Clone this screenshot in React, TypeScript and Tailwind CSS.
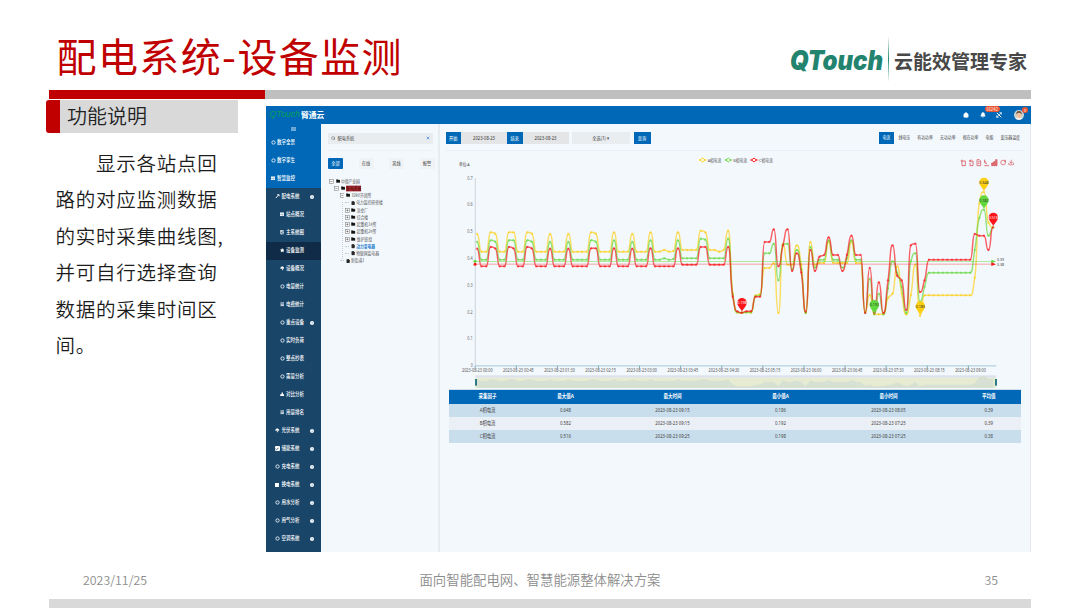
import type { ReactNode } from "react";
import {
  Bell,
  Check,
  Download,
  FileText,
  Folder,
  House,
  Image,
  Maximize2,
  RotateCw,
  Search,
  Star,
  Umbrella,
  X,
} from "lucide-react";

const CJK = "font-['Noto_Sans_CJK_SC',sans-serif]";

/* ---------- sidebar ---------- */

type IconName =
  | "circle"
  | "grid"
  | "bolt"
  | "image"
  | "star"
  | "umbrella"
  | "list"
  | "org"
  | "check"
  | "square";

interface MenuItem {
  label: string;
  icon: IconName;
  level: 0 | 1 | 2;
  more?: boolean;
  active?: boolean;
}

const MENU: MenuItem[] = [
  { label: "数字全景", icon: "circle", level: 0 },
  { label: "数字孪生", icon: "circle", level: 0 },
  { label: "智慧监控", icon: "grid", level: 0 },
  { label: "配电系统", icon: "bolt", level: 1, more: true },
  { label: "站点概况", icon: "grid", level: 2 },
  { label: "主系统图", icon: "image", level: 2 },
  { label: "设备监测", icon: "star", level: 2, active: true },
  { label: "设备概况", icon: "umbrella", level: 2 },
  { label: "电量统计", icon: "circle", level: 2 },
  { label: "电费统计", icon: "list", level: 2 },
  { label: "重点设备", icon: "circle", level: 2, more: true },
  { label: "实时负荷", icon: "circle", level: 2 },
  { label: "整点抄表", icon: "circle", level: 2 },
  { label: "需量分析", icon: "circle", level: 2 },
  { label: "对比分析", icon: "org", level: 2 },
  { label: "用量排名", icon: "list", level: 2 },
  { label: "光伏系统", icon: "umbrella", level: 1, more: true },
  { label: "储能系统", icon: "check", level: 1, more: true },
  { label: "充电系统", icon: "circle", level: 1, more: true },
  { label: "换电系统", icon: "square", level: 1, more: true },
  { label: "用水分析", icon: "circle", level: 1, more: true },
  { label: "用气分析", icon: "circle", level: 1, more: true },
  { label: "空调系统", icon: "circle", level: 1, more: true },
];

const INDENT = ["pl-[4.5px]", "pl-[9px]", "pl-[13.5px]"];

function MenuIcon({ name }: { name: IconName }) {
  switch (name) {
    case "circle":
      return (
        <svg width="5" height="5" viewBox="0 0 10 10">
          <circle cx="5" cy="5" r="3.3" fill="none" stroke="#dfe8f0" strokeWidth="1.9" />
        </svg>
      );
    case "grid":
      return (
        <svg width="4.5" height="4.5" viewBox="0 0 10 10">
          <path d="M0 1 H10 V9 H0 Z" fill="#eef4f9" />
          <path d="M5 3 V9 M0 5.5 H10" stroke="#7f9fbd" strokeWidth="1" />
        </svg>
      );
    case "bolt":
      return (
        <svg width="4.5" height="4.5" viewBox="0 0 10 10">
          <path d="M2 9 L8 2 M5 1.5 H9 V5" stroke="white" strokeWidth="2" fill="none" />
        </svg>
      );
    case "image":
      return <Image size={4.5} strokeWidth={3.5} />;
    case "star":
      return <Star size={4.5} fill="white" />;
    case "umbrella":
      return <Umbrella size={4.5} fill="white" strokeWidth={2} />;
    case "list":
      return (
        <svg width="4.5" height="4.5" viewBox="0 0 10 10">
          <path d="M1 2 H9 M1 5 H9 M1 8 H9" stroke="white" strokeWidth="1.8" />
        </svg>
      );
    case "org":
      return (
        <svg width="4.5" height="4.5" viewBox="0 0 10 10" fill="white">
          <path d="M3.5 1 H6.5 V5 H9.5 V9 H.5 V5 H3.5 Z" />
        </svg>
      );
    case "check":
      return (
        <span className="flex size-[4.5px] items-center justify-center rounded-[1px] bg-white text-[#194569]">
          <Check size={4} strokeWidth={5} />
        </span>
      );
    default:
      return <span className="size-[4px] bg-white" />;
  }
}

function Sidebar() {
  return (
    <nav className="flex w-[54.5px] shrink-0 flex-col bg-[#194569] text-white">
      <div className="flex h-[9.5px] items-center justify-center bg-[#0068b7]">
        <svg width="5" height="4" viewBox="0 0 10 8">
          <path d="M0 1.5 H10 M0 4 H10 M0 6.5 H10" stroke="white" strokeWidth="1.2" />
        </svg>
      </div>
      {MENU.map((m) => (
        <div
          key={m.label}
          className={`flex h-[18px] shrink-0 items-center ${INDENT[m.level]} ${
            m.level === 0 ? "bg-[#0068b7]" : m.active ? "bg-[#0f2b47]" : ""
          }`}
        >
          <span className="flex w-[6.5px] shrink-0 items-center">
            <MenuIcon name={m.icon} />
          </span>
          <span className="scale-y-120 text-[4.5px] leading-none font-medium whitespace-nowrap">{m.label}</span>
          {m.more ? (
            <svg className="mr-[7px] ml-auto" width="4" height="4" viewBox="0 0 8 8">
              <circle cx="4" cy="4" r="4" fill="white" />
              <path d="M3.2 2.4 L5 4 L3.2 5.6" fill="none" stroke="#194569" strokeWidth="1" />
            </svg>
          ) : null}
        </div>
      ))}
    </nav>
  );
}

/* ---------- station tree ---------- */

interface Node {
  label: string;
  depth: 0 | 1 | 2 | 3;
  leaf?: boolean;
  open?: boolean;
  hit?: boolean;
  selected?: boolean;
}

const NODES: Node[] = [
  { label: "中德产业园", depth: 0, open: true },
  { label: "配电系统", depth: 1, open: true, hit: true },
  { label: "10kV开闭所", depth: 2, open: true },
  { label: "电力监控研修楼", depth: 3, leaf: true },
  { label: "冶金厂", depth: 3 },
  { label: "综合楼", depth: 3 },
  { label: "起重机1#所", depth: 3 },
  { label: "起重机2#所", depth: 3 },
  { label: "维护班组", depth: 3 },
  { label: "动力变电器", depth: 3, leaf: true, selected: true },
  { label: "物联网监电器", depth: 3, leaf: true },
  { label: "新街道1", depth: 2, leaf: true },
];

const TREE_INDENT = ["pl-0", "pl-[5.3px]", "pl-[10.6px]", "pl-[15.9px]"];

function TreeRow({ node }: { node: Node }) {
  return (
    <div className={`flex h-[7.25px] items-center ${TREE_INDENT[node.depth]}`}>
      {node.leaf ? (
        <span className="mr-[1.8px] h-px w-[4.2px] border-t border-dotted border-[#c3cad0]" />
      ) : (
        <svg className="mr-[1.8px] shrink-0" width="4.8" height="4.8" viewBox="0 0 9 9">
          <rect x=".7" y=".7" width="7.6" height="7.6" fill="#fff" stroke="#777" strokeWidth="1" />
          <path d={node.open ? "M2.5 4.5 H6.5" : "M2.5 4.5 H6.5 M4.5 2.5 V6.5"} stroke="#444" />
        </svg>
      )}
      {node.leaf ? (
        <FileText className="mr-[1px] shrink-0" size={4.3} color="#222" fill="#333" strokeWidth={2} />
      ) : (
        <Folder className="mr-[1px] shrink-0" size={4.3} color="#111" fill="#111" />
      )}
      <span
        className={`scale-y-115 text-[3.8px] leading-[5px] whitespace-nowrap ${
          node.hit
            ? "bg-[#b02a2e] text-[#32080a]"
            : node.selected
              ? "font-bold text-[#1b7bc8]"
              : "text-[#555]"
        }`}
      >
        {node.label}
      </span>
    </div>
  );
}

function StationPanel() {
  return (
    <aside className="w-[119px] shrink-0 border-r-2 border-[#e5edf0] bg-[#f3f8fd] pl-[7.5px]">
      <div className="mt-[8.5px] flex h-[11px] w-[105px] items-center bg-[#e8ecef] px-[3px] text-[4.2px] text-[#444]">
        <Search size={4.5} />
        <span className="ml-[2px] scale-y-120">配电系统</span>
        <X className="ml-auto" size={4} color="#2f7fd6" strokeWidth={4} />
      </div>
      <div className="mt-[6px] h-px w-[105px] bg-[#edf2f6]" />
      <div className="mt-[7px] flex gap-[15.5px] text-[4.2px] text-[#444]">
        <span className="flex h-[11px] w-[15px] items-center justify-center rounded-[1px] bg-[#0068b7] text-white">
          <span className="scale-y-120">全部</span>
        </span>
        {["在线", "离线", "报警"].map((t) => (
          <span key={t} className="flex h-[11px] w-[15px] items-center justify-center bg-[#f0f3f5]">
            <span className="scale-y-120">{t}</span>
          </span>
        ))}
      </div>
      <div className="relative mt-[9px] ml-[1px]">
        <span className="absolute top-[24px] left-[13px] h-[57px] w-px border-l border-dotted border-[#c3cad0]" />
        {NODES.map((n) => (
          <TreeRow key={n.label} node={n} />
        ))}
      </div>
    </aside>
  );
}

/* ---------- chart ---------- */

const YELLOW = "#fdcf12";
const GREEN = "#62d83c";
const RED = "#fb1418";

// [A, B, C] phase samples every 5 minutes, in plot units (0.1 A = 80.4 units, 0 at y 587)
const LOW = [245, 269, 289];
const MID = [240, 265, 284];
const HI_A = [187, 211, 231];
const HI_B = [191, 215, 235];
const PEAK = [187, 211, 235];
const DIP = [192, 216, 236];
const TAIL = [376, 308, 269];
const FLAT = [279, 269, 255];

const SAMPLES: number[][] = [
  DIP, LOW, LOW, HI_A, HI_B, LOW, LOW, HI_A, [187, 211, 235], LOW, LOW,
  HI_A, HI_B, LOW, LOW, LOW, DIP, LOW, LOW, LOW, DIP, LOW, LOW, LOW, LOW,
  PEAK, HI_B, LOW, LOW, LOW, PEAK, LOW, LOW, LOW, DIP, LOW, LOW, LOW,
  PEAK, LOW, LOW, [240, 265, 289], LOW, [243, 267, 289], PEAK, MID, MID, MID, MID,
  [182, 206, 231], [187, 209, 231], MID, MID, [245, 265, 284], [240, 265, 284],
  [182, 206, 231], [370, 374, 380], [427, 427, 424], [428, 428, 428], [427, 427, 424], [428, 427, 424],
  [376, 379, 380], [372, 376, 380], [294, 250, 216], [294, 250, 216], [279, 221, 178],
  [429, 331, 289], [222, 223, 226], [284, 221, 178], [284, 298, 303], [226, 240, 250],
  [284, 298, 307], [429, 429, 425], [216, 231, 240], [284, 293, 303], [279, 269, 260],
  FLAT, [216, 211, 202], FLAT, FLAT, [279, 293, 303], [279, 265, 255], [216, 211, 197],
  FLAT, FLAT, [425, 429, 429], [375, 327, 294], [433, 433, 429], [433, 371, 337],
  [433, 433, 429], [384, 355, 331], [371, 274, 226], [289, 308, 317], [371, 351, 331],
  [433, 429, 420], [375, 274, 226], [284, 250, 221], [438, 395, 366], [376, 351, 331],
  TAIL, TAIL, TAIL, TAIL, TAIL, TAIL, TAIL, TAIL, TAIL, TAIL,
  [323, 240, 192], [100, 144, 197], [66, 119, 197], [158, 197, 240], [172, 172, 172],
];

const STEP = 13.7;
const BEND = 0.62;
const xAt = (i: number) => 111 + i * STEP;

function smoothPath(ys: number[]) {
  const slope = ys.map((y, i) => {
    if (i === 0 || i === ys.length - 1) return 0;
    const a = y - ys[i - 1];
    const b = ys[i + 1] - y;
    return a * b <= 0 ? 0 : (2 * a * b) / (a + b);
  });
  let d = `M${xAt(0)} ${ys[0]}`;
  for (let i = 1; i < ys.length; i++) {
    const x1 = xAt(i - 1) + STEP * BEND;
    const y1 = ys[i - 1] + slope[i - 1] * BEND;
    const x2 = xAt(i) - STEP * BEND;
    const y2 = ys[i] - slope[i] * BEND;
    d += ` C${x1} ${y1} ${x2} ${y2} ${xAt(i)} ${ys[i]}`;
  }
  return d;
}

function Series({ index, color }: { index: number; color: string }) {
  const ys = SAMPLES.map((s) => s[index]);
  return (
    <g>
      <path d={smoothPath(ys)} fill="none" stroke={color} strokeWidth="4.4" opacity=".66" />
      {ys.map((y, i) => (
        <circle key={i} cx={xAt(i)} cy={y} r="3.5" fill={color} opacity=".6" />
      ))}
    </g>
  );
}

function Pin({ x, y, color, text, light }: { x: number; y: number; color: string; text: string; light?: boolean }) {
  return (
    <g transform={`translate(${x} ${y})`}>
      <path d="M0 25 C-2 16 -14 10 -14 -2 A14 14 0 0 1 14 -2 C14 10 2 16 0 25 Z" fill={color} />
      <text y="3" fontSize="11" textAnchor="middle" fill={light ? "#fff" : "#333"}>
        {text}
      </text>
    </g>
  );
}

const TIMES = [
  "00:00", "00:45", "01:30", "02:15", "03:00", "03:45", "04:30",
  "05:15", "06:00", "06:45", "07:30", "08:15", "09:00",
];

const LEGEND = [
  { x: 788, label: "A相电流", color: YELLOW },
  { x: 865, label: "B相电流", color: GREEN },
  { x: 942, label: "C相电流", color: RED },
];

function Chart() {
  const area = SAMPLES.map((s, i) => `${xAt(i).toFixed(1)},${(612 + s[0] * 0.085).toFixed(1)}`).join(" ");
  return (
    <svg className="block h-[239px] w-[591px]" viewBox="0 -57 1773 717" fontFamily="'Noto Sans','Noto Sans CJK SC',sans-serif">
      {LEGEND.map((l) => (
        <g key={l.label}>
          <path d={`M${l.x - 11} -30 h22`} stroke={l.color} strokeWidth="3.5" />
          <path d={`M${l.x - 7} -30 l7 -6 l7 6 l-7 6 Z`} fill="#fff" stroke={l.color} strokeWidth="3" />
          <text x={l.x + 15} y="-25.5" fontSize="13" fill="#555" textLength="41" lengthAdjust="spacingAndGlyphs">
            {l.label}
          </text>
        </g>
      ))}
      <text x="57" y="-12" fontSize="13" fill="#444" textLength="32" lengthAdjust="spacingAndGlyphs">
        单位:A
      </text>
      <path d="M106 24 V587" stroke="#d5dde3" strokeWidth="4" />
      <path d="M105 587.5 H1669" stroke="#b4d3df" strokeWidth="4" />
      {["0.7", "0.6", "0.5", "0.4", "0.3", "0.2", "0.1", "0"].map((v, i) => (
        <text key={v} x="98" y={29 + i * 80.4} fontSize="14" fill="#666" textAnchor="end" textLength={v === "0" ? 6 : 16} lengthAdjust="spacingAndGlyphs">
          {v}
        </text>
      ))}
      {TIMES.map((t, i) => (
        <g key={t}>
          <path d={`M${105.5 + i * 123.3} 587 v7`} stroke="#7fa9b8" strokeWidth="3" />
          <text x={66 + i * 123.3} y="606" fontSize="14" fill="#555" textLength="92" lengthAdjust="spacingAndGlyphs">
            {`2023-08-23 ${t}`}
          </text>
        </g>
      ))}

      <Series index={0} color={YELLOW} />
      <Series index={1} color={GREEN} />
      <Series index={2} color={RED} />

      <path d="M105 274.5 H1655" stroke={GREEN} strokeWidth="2.5" opacity=".55" />
      <path d="M105 282.5 H1655" stroke={RED} strokeWidth="2.5" opacity=".45" />
      <circle cx="105" cy="274" r="4.5" fill={GREEN} />
      <circle cx="105" cy="282.5" r="4.5" fill={RED} />
      <path d="M1654 269 l14 5.5 l-14 5.5 Z" fill={GREEN} />
      <path d="M1654 277 l14 5.5 l-14 5.5 Z" fill={RED} />
      <text x="1671" y="274" fontSize="9" fill="#444" textLength="21" lengthAdjust="spacingAndGlyphs">0.39</text>
      <text x="1671" y="287" fontSize="9" fill="#444" textLength="21" lengthAdjust="spacingAndGlyphs">0.38</text>

      <Pin x={906} y={400} color={RED} text="0.198" light />
      <Pin x={1303} y={406} color={GREEN} text="0.192" />
      <Pin x={1441} y={410} color={YELLOW} text="0.186" />
      <Pin x={1632} y={39} color={YELLOW} text="0.648" />
      <Pin x={1632} y={92} color={GREEN} text="0.582" />
      <Pin x={1660} y={144} color={RED} text="0.516" light />

      <rect x="106" y="616" width="1562" height="7" fill="#dbe1ee" />
      <rect x="106" y="623" width="1562" height="31" fill="#e6ebd2" />
      <polygon points={`111,654 ${area} 1660,654`} fill="#d6e1d3" />
      <rect x="105" y="627" width="6" height="20" fill="#2c7a86" />
      <rect x="1665" y="627" width="6" height="20" fill="#2c7a86" />
      <path d="M27 658.5 H1744" stroke="#c6d8e8" strokeWidth="2.5" />

      <g fill="none" stroke="#d5494e" strokeWidth="2.2">
        <path d="M1562 -27 h14 v14 h-10 v-18" />
        <path d="M1594 -31 l-6 4 l6 4 M1588 -27 h11 v14 h-9 v-8" />
        <path d="M1611 -31 h7 l4 4 v14 h-11 Z M1614 -25 h5 M1614 -20 h5" />
        <path d="M1634 -31 v9 l7 4 M1633 -13 h14 M1633 -27 l6 5" />
        <path d="M1655 -13 v-8 h4 v8 Z M1661 -13 v-12 h4 v12 Z M1667 -13 v-18 h4 v18 Z" fill="#e58a8d" />
      </g>
      <RotateCw x="1680" y="-32" width="19" height="19" color="#d5494e" strokeWidth={2.5} />
      <Download x="1704" y="-32" width="19" height="19" color="#d5494e" strokeWidth={2.5} />
    </svg>
  );
}

/* ---------- toolbar + table ---------- */

function Blue({ children, className = "w-[15.5px]" }: { children: ReactNode; className?: string }) {
  return (
    <span className={`flex h-[11.5px] shrink-0 items-center justify-center bg-[#0068b7] text-white ${className}`}>
      <span className="scale-y-120">{children}</span>
    </span>
  );
}

function DateField() {
  return (
    <span className="flex h-[11.5px] w-[46px] items-center justify-center bg-[#e4e5e6] font-['Noto_Sans'] text-[4.2px] text-[#333]">
      <span className="translate-y-[0.7px] scale-y-120">2023-08-23</span>
    </span>
  );
}

const METRICS = ["线电压", "有功功率", "无功功率", "视在功率", "电能", "变压器温度"];

function Toolbar() {
  return (
    <div className="mx-[6px] flex h-[26.5px] items-end border-b border-[#e9eff4] pb-[6px] text-[4.2px] text-[#444]">
      <Blue>开始</Blue>
      <DateField />
      <Blue>结束</Blue>
      <DateField />
      <span className="ml-[3px] flex h-[11.5px] w-[58px] items-center justify-center bg-[#e9edf0]">
        <span className="scale-y-120">全选(3) ▾</span>
      </span>
      <Blue className="ml-[4px] w-[17px]">查询</Blue>
      <div className="mr-[4px] ml-auto flex items-center gap-[7.2px] text-[3.9px] whitespace-nowrap">
        <Blue className="-mr-[2.5px] w-[15px]">电流</Blue>
        {METRICS.map((m) => (
          <span key={m} className="scale-y-120">
            {m}
          </span>
        ))}
      </div>
    </div>
  );
}

const HEAD = ["采集因子", "最大值A", "最大时间", "最小值A", "最小时间", "平均值"];
const ROWS = [
  ["A相电流", "0.648", "2023-08-23 09:15", "0.186", "2023-08-23 08:05", "0.39"],
  ["B相电流", "0.582", "2023-08-23 09:15", "0.192", "2023-08-23 07:25", "0.39"],
  ["C相电流", "0.516", "2023-08-23 09:25", "0.198", "2023-08-23 07:25", "0.38"],
];
const COLS = "grid grid-cols-[78px_78px_136px_80px_136px_64.5px] items-center text-center";

function ResultTable() {
  return (
    <div className="ml-[9px] w-[572.5px] font-['Noto_Sans','Noto_Sans_CJK_SC',sans-serif] text-[4.3px] text-[#444]">
      <div className={`${COLS} h-[13.5px] bg-[#0068b7] text-[4.5px] font-bold text-white`}>
        {HEAD.map((h) => (
          <span key={h} className="scale-y-120">
            {h}
          </span>
        ))}
      </div>
      {ROWS.map((row, i) => (
        <div key={row[0]} className={`${COLS} h-[13px] ${i % 2 ? "bg-[#ebeff6]" : "bg-[#c8deec]"}`}>
          {row.map((cell, j) => (
            <span key={j} className="scale-y-120">
              {cell}
            </span>
          ))}
        </div>
      ))}
    </div>
  );
}

function TopBar() {
  return (
    <header className="flex h-[18.5px] shrink-0 items-center bg-[#0068b7] pl-[3.5px] text-white">
      <span className="w-[31.5px] font-['Liberation_Sans'] text-[8.8px] leading-none text-[#04a05a] italic">QTouch</span>
      <span className="text-[7.8px] leading-none font-bold">臂通云</span>
      <div className="mr-[7.5px] ml-auto flex items-center">
        <House size={6} fill="white" strokeWidth={1.5} />
        <Bell className="ml-[11px]" size={6} fill="white" />
        <span className="relative ml-[10px] flex">
          <Maximize2 size={6} strokeWidth={3} />
          <svg className="absolute top-0 left-0" width="6" height="6" viewBox="0 0 24 24">
            <path d="M3 3 L21 21" stroke="white" strokeWidth="4" />
          </svg>
          <span className="absolute -top-[5.5px] -left-[11px] rounded-full bg-[#ea5430] px-[1.5px] text-[4.4px] leading-[6px]">
            16242
          </span>
        </span>
        <span className="relative ml-[12px] flex">
          <svg width="10" height="10" viewBox="0 0 20 20">
            <circle cx="10" cy="10" r="10" fill="#c9d3d3" />
            <path d="M3 17 Q10 11 17 17 Q10 22 3 17" fill="#f7f7f7" />
            <ellipse cx="10" cy="10" rx="5" ry="6.3" fill="#eec39c" />
            <path d="M4.5 9 Q4 2 10 2 Q16 2 15.5 9 Q13 5 10 5.5 Q7 5 4.5 9" fill="#5f4c45" />
          </svg>
          <span className="absolute -top-[3px] -right-[4.5px] size-[6px] rounded-full bg-[#ea5430] text-center text-[4px] leading-[6px]">
            0
          </span>
        </span>
      </div>
    </header>
  );
}

function Dashboard() {
  return (
    <section className="mt-[6.5px] ml-[266px] flex h-[446.5px] w-[765px] flex-col overflow-hidden bg-[#f3f8fd]">
      <TopBar />
      <div className="flex min-h-0 flex-1">
        <Sidebar />
        <StationPanel />
        <main className="min-w-0 flex-1 border-r border-[#e2e8ed]">
          <Toolbar />
          <div className="mt-[0.5px] w-[591px]">
            <Chart />
          </div>
          <ResultTable />
        </main>
      </div>
    </section>
  );
}

/* ---------- slide ---------- */

const LINES = [
  "显示各站点回",
  "路的对应监测数据",
  "的实时采集曲线图,",
  "并可自行选择查询",
  "数据的采集时间区",
  "间。",
];

function Description() {
  return (
    <div className="absolute top-[100px] left-[46px] w-[192px]">
      <div className="flex h-[33px]">
        <span className="w-[14px] rounded-l-[3px] bg-[#c00000]" />
        <h2 className="flex flex-1 items-center bg-[#d9d9d9] pb-px pl-[7px] text-[20px] leading-none font-[350] text-[#222]">
          功能说明
        </h2>
      </div>
      <div className="mt-[11.5px] ml-[9.5px] text-[19.5px] leading-[36.6px] font-[350] tracking-[0.75px] whitespace-nowrap text-[#1c1c1c]">
        {LINES.map((line, i) => (
          <p key={line} className={i === 0 ? "pl-[40.5px]" : ""}>
            {line}
          </p>
        ))}
      </div>
    </div>
  );
}

function BrandLogo() {
  return (
    <svg className="mt-[34px] mr-[50px] h-[50px] w-[242px]" viewBox="788 34 242 50">
      <defs>
        <linearGradient id="divider" x1="0" y1="0" x2="0" y2="1">
          <stop offset="0" stopColor="#2b8a74" stopOpacity="0" />
          <stop offset=".5" stopColor="#2b8a74" />
          <stop offset="1" stopColor="#2b8a74" stopOpacity="0" />
        </linearGradient>
      </defs>
      <text x="790" y="69.5" fontFamily="Inter" fontWeight="900" fontStyle="italic" fontSize="27" fill="#22836f" textLength="93" lengthAdjust="spacingAndGlyphs">
        QTouch
      </text>
      <rect x="888" y="36" width="1" height="46" fill="url(#divider)" />
      <text x="894" y="68.5" fontFamily="'Noto Sans CJK SC',sans-serif" fontWeight="700" fontSize="19.5" fill="#484848" textLength="133" lengthAdjust="spacingAndGlyphs">
        云能效管理专家
      </text>
    </svg>
  );
}

export default function App() {
  return (
    <div className={`relative flex h-[608px] w-[1080px] flex-col overflow-hidden bg-white ${CJK}`}>
      <div className="flex h-[90px] shrink-0 justify-between">
        <h1 className="mt-[25px] ml-[56.5px] text-[40px] leading-[60px] font-normal tracking-[1.4px] whitespace-nowrap text-[#c00000]">
          配电系统-设备监测
        </h1>
        <BrandLogo />
      </div>
      <div className="ml-[49px] flex h-[9px] w-[982px] shrink-0">
        <span className="w-[216px] bg-[#c00000]" />
        <span className="flex-1 bg-[#bfbfbf]" />
      </div>

      <Dashboard />
      <Description />

      <footer className="mt-auto">
        <div className="mr-[82px] ml-[83px] flex h-[20px] items-center justify-between text-[13.4px] leading-none font-[350] text-[#8c8c8c]">
          <span className="w-[120px] text-[12.4px]">2023/11/25</span>
          <span className="mr-[31px] whitespace-nowrap">面向智能配电网、智慧能源整体解决方案</span>
          <span className="w-[90px] text-right text-[12.4px]">35</span>
        </div>
        <div className="mt-[8.5px] ml-[49px] h-[9.5px] w-[982px] bg-[#d9d9d9]" />
      </footer>
    </div>
  );
}
